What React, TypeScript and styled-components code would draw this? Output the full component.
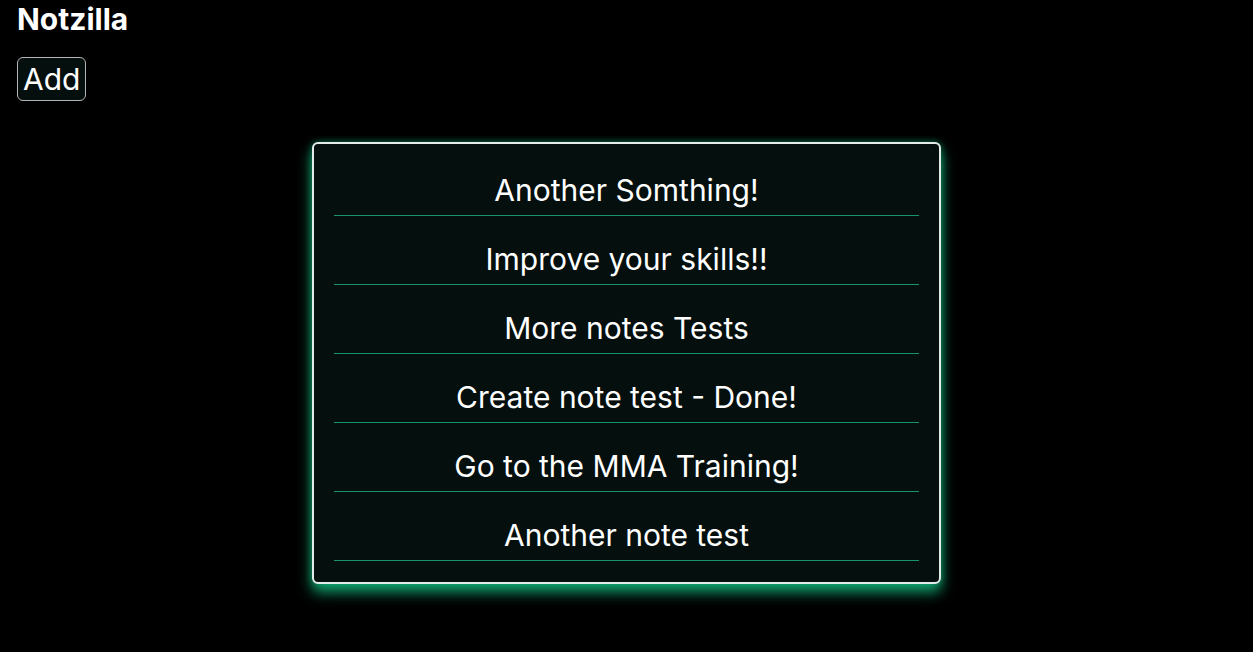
import styled, { createGlobalStyle } from 'styled-components';

const GlobalStyle = createGlobalStyle`
  html {
    background: #000;
  }
  body {
    margin: 0;
    color: #fff;
    font-family: Inter, "Noto Sans", sans-serif;
  }
`;

const Header = styled.header`
  padding: 1px 16px 0 17px;
`;

const Title = styled.h1`
  margin: 0;
  font-size: 30px;
  font-weight: 700;
  line-height: 36px;
`;

const AddButton = styled.button`
  margin-top: 20px;
  padding: 3px 5px;
  font-family: inherit;
  font-size: 30px;
  line-height: 36px;
  color: #fff;
  background: #050f0e;
  border: 1px solid #b5b5b5;
  border-radius: 6px;
  cursor: pointer;
`;

const NoteList = styled.ul`
  position: relative;
  width: calc(50% + 2px);
  margin: 41px auto 40px;
  padding: 3px 20px 21px;
  box-sizing: border-box;
  list-style: none;
  background: #050f0e;
  border: 2px solid #e3ebe9;
  border-radius: 6px;
  box-shadow: 0 8px 14px #0fa56f, 0 0 7px rgba(16, 170, 115, 0.55);
`;

const NoteItem = styled.li`
  padding: 25px 0 7px;
  font-size: 30px;
  line-height: 36px;
  text-align: center;
  border-bottom: 1px solid #17946a;
`;

const notes = [
  'Another Somthing!',
  'Improve your skills!!',
  'More notes Tests',
  'Create note test - Done!',
  'Go to the MMA Training!',
  'Another note test',
];

export default function App() {
  return (
    <>
      <GlobalStyle />
      <Header>
        <Title>Notzilla</Title>
        <AddButton>Add</AddButton>
      </Header>
      <NoteList>
        {notes.map((note) => (
          <NoteItem key={note}>{note}</NoteItem>
        ))}
      </NoteList>
    </>
  );
}
